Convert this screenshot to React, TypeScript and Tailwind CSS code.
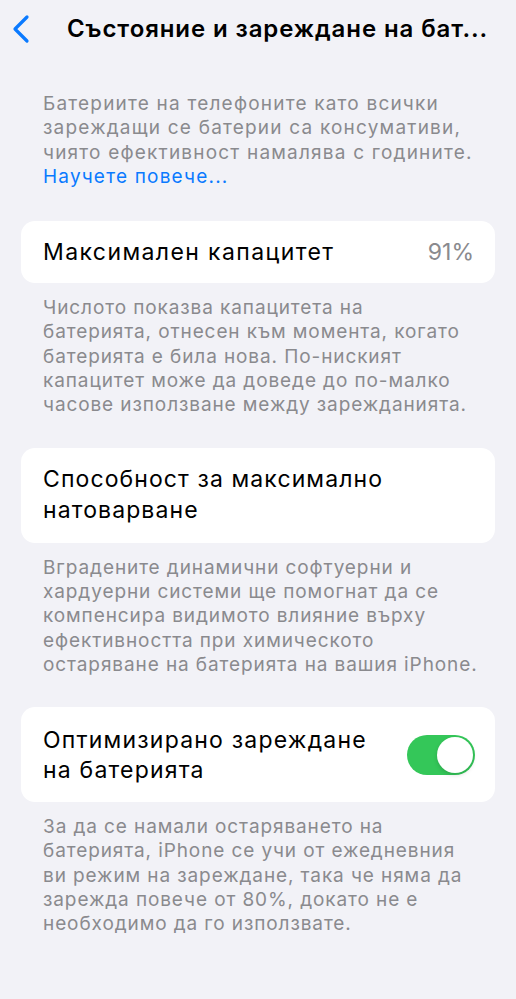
import React from "react";

const font = { fontFamily: "Inter, 'Noto Sans', sans-serif" };

const Footer = ({ lines }: { lines: string[] }) => (
  <p className="px-[43px] pt-[13px] text-[19px] leading-[24.3px] tracking-[0.9px] text-[#8a8a8e] whitespace-nowrap">
    {lines.map((l, i) => (
      <span key={i} className="block">
        {l}
      </span>
    ))}
  </p>
);

const App = () => {
  return (
    <div className="min-h-[999px] w-[516px] bg-[#f2f2f7]" style={font}>
      <div className="flex h-[58px] items-center pl-[11px]">
        <svg width="20" height="30" viewBox="0 0 20 30" className="shrink-0">
          <path
            d="M16 3 L4 15 L16 27"
            fill="none"
            stroke="#0a7aff"
            strokeWidth="3.2"
            strokeLinecap="round"
            strokeLinejoin="round"
          />
        </svg>
        <h1 className="ml-[36px] whitespace-nowrap text-[24px] font-semibold tracking-[0.9px] text-black">
          Състояние и зареждане на бат...
        </h1>
      </div>

      <p className="mt-[34px] px-[43px] text-[19px] leading-[24.3px] tracking-[1.2px] text-[#8a8a8e] whitespace-nowrap">
        <span className="block">Батериите на телефоните като всички</span>
        <span className="block">зареждащи се батерии са консумативи,</span>
        <span className="block">чиято ефективност намалява с годините.</span>
        <span className="block text-[#0a7aff]">Научете повече...</span>
      </p>

      <div className="mx-[21px] mt-[32px] flex h-[62px] items-center justify-between rounded-[14px] bg-white pl-[22px] pr-[21px]">
        <span className="text-[23px] tracking-[1.4px] text-black">Максимален капацитет</span>
        <span className="text-[23px] text-[#8a8a8e]">91%</span>
      </div>
      <Footer
        lines={[
          "Числото показва капацитета на",
          "батерията, отнесен към момента, когато",
          "батерията е била нова. По-ниският",
          "капацитет може да доведе до по-малко",
          "часове използване между зарежданията.",
        ]}
      />

      <div className="mx-[21px] mt-[30px] flex h-[95px] items-center rounded-[14px] bg-white px-[22px]">
        <span className="whitespace-nowrap text-[23px] leading-[31px] tracking-[1.1px] text-black">
          Способност за максимално
          <br />
          натоварване
        </span>
      </div>
      <Footer
        lines={[
          "Вградените динамични софтуерни и",
          "хардуерни системи ще помогнат да се",
          "компенсира видимото влияние върху",
          "ефективността при химическото",
          "остаряване на батерията на вашия iPhone.",
        ]}
      />

      <div className="mx-[21px] mt-[30px] flex h-[95px] items-center justify-between rounded-[14px] bg-white pl-[22px] pr-[20px]">
        <span className="whitespace-nowrap text-[23px] leading-[30px] tracking-[1.2px] text-black">
          Оптимизирано зареждане
          <br />
          на батерията
        </span>
        <div className="flex h-[40px] w-[68px] shrink-0 items-center justify-end rounded-full bg-[#34c759] p-[2px]">
          <div className="h-[36px] w-[36px] rounded-full bg-white shadow-[0_2px_4px_rgba(0,0,0,0.15)]" />
        </div>
      </div>
      <Footer
        lines={[
          "За да се намали остаряването на",
          "батерията, iPhone се учи от ежедневния",
          "ви режим на зареждане, така че няма да",
          "зарежда повече от 80%, докато не е",
          "необходимо да го използвате.",
        ]}
      />
    </div>
  );
};

export default App;
